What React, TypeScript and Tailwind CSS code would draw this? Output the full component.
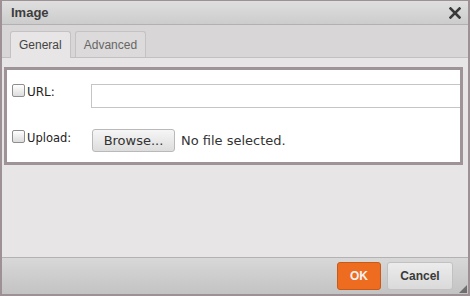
import React from "react";

function Checkbox() {
  return (
    <span className="inline-block w-[13px] h-[13px] shrink-0 rounded-[2px] border border-[#8e8e8e] bg-gradient-to-b from-[#ffffff] to-[#dcdcdc]" />
  );
}

export default function App() {
  const sans = { fontFamily: '"Liberation Sans", Arial, sans-serif' };
  const dejavu = { fontFamily: '"DejaVu Sans", sans-serif' };

  return (
    <div
      className="w-[470px] h-[296px] flex flex-col border-2 border-t border-[#9d9195] bg-[#e7e5e5] overflow-hidden"
      style={sans}
    >
      {/* title bar */}
      <div className="h-[24px] shrink-0 flex items-center justify-between pl-[9px] pr-[6px] bg-gradient-to-b from-[#e0dfdf] to-[#cdcccc] border-b border-[#b2b0b0]">
        <span className="text-[13px] font-bold text-[#3d3d3d]">Image</span>
        <svg width="12" height="12" viewBox="0 0 12 12" className="mr-[1px]">
          <path d="M1.5 1.5 L10.5 10.5 M10.5 1.5 L1.5 10.5" stroke="#3a3a3a" strokeWidth="2.6" strokeLinecap="square" />
        </svg>
      </div>

      {/* tabs */}
      <div className="h-[33px] shrink-0 flex items-end gap-[4px] pl-[8px] bg-[#d8d6d6] border-b border-[#c2c0c0]">
        <div className="h-[27px] -mb-px px-[8px] flex items-center rounded-t-[3px] border border-b-0 border-[#c4c2c2] bg-[#e7e5e5] text-[12px] text-[#444]">
          General
        </div>
        <div className="h-[26px] px-[8px] flex items-center rounded-t-[3px] border border-b-0 border-[#c4c2c2] bg-[#dcdada] text-[12px] text-[#666]">
          Advanced
        </div>
      </div>

      {/* content */}
      <div className="flex-1 pt-[9px] pl-[2px] pr-[5px]">
        <div className="border-[3px] border-[#9e9397] bg-white pl-[5px] pt-[14px] pb-[10px] overflow-hidden" style={dejavu}>
          <div className="flex items-start">
            <div className="w-[79px] flex items-start gap-[2px]">
              <Checkbox />
              <span className="text-[12px] leading-[14px] mt-[1px] text-[#222]">URL:</span>
            </div>
            <div className="h-[24px] flex-1 -mr-[3px] border border-[#c5c5c5] bg-white" />
          </div>
          <div className="flex items-start mt-[21px]">
            <div className="w-[80px] flex items-start gap-[2px] mt-[1px]">
              <Checkbox />
              <span className="text-[11.5px] leading-[14px] mt-[1px] text-[#222]">Upload:</span>
            </div>
            <div className="h-[23px] w-[83px] flex items-center justify-center rounded-[3px] border border-[#b9b9b9] bg-gradient-to-b from-[#f6f6f6] to-[#dddddd] text-[13px] text-[#333]">
              Browse...
            </div>
            <span className="ml-[6px] text-[13px] leading-[23px] text-[#333]">No file selected.</span>
          </div>
        </div>
      </div>

      {/* footer */}
      <div className="h-[37px] shrink-0 flex items-center justify-end gap-[6px] pr-[15px] bg-gradient-to-b from-[#d9d8d8] to-[#c4c3c3] border-t border-[#b3b1b1] relative">
        <div className="h-[28px] w-[44px] flex items-center justify-center rounded-[3px] border border-[#c85a18] bg-[#ee6c20] text-[12px] font-bold text-[#f2f2f2]">
          OK
        </div>
        <div className="h-[28px] w-[66px] flex items-center justify-center rounded-[3px] border border-[#c2c0c0] bg-gradient-to-b from-[#ececec] to-[#dadada] text-[12px] font-bold text-[#3a3a3a]">
          Cancel
        </div>
        <svg width="8" height="8" viewBox="0 0 8 8" className="absolute right-[1px] bottom-[1px]">
          <path d="M8 0 L8 8 L0 8 Z" fill="#6f6f6f" />
        </svg>
      </div>
    </div>
  );
}
